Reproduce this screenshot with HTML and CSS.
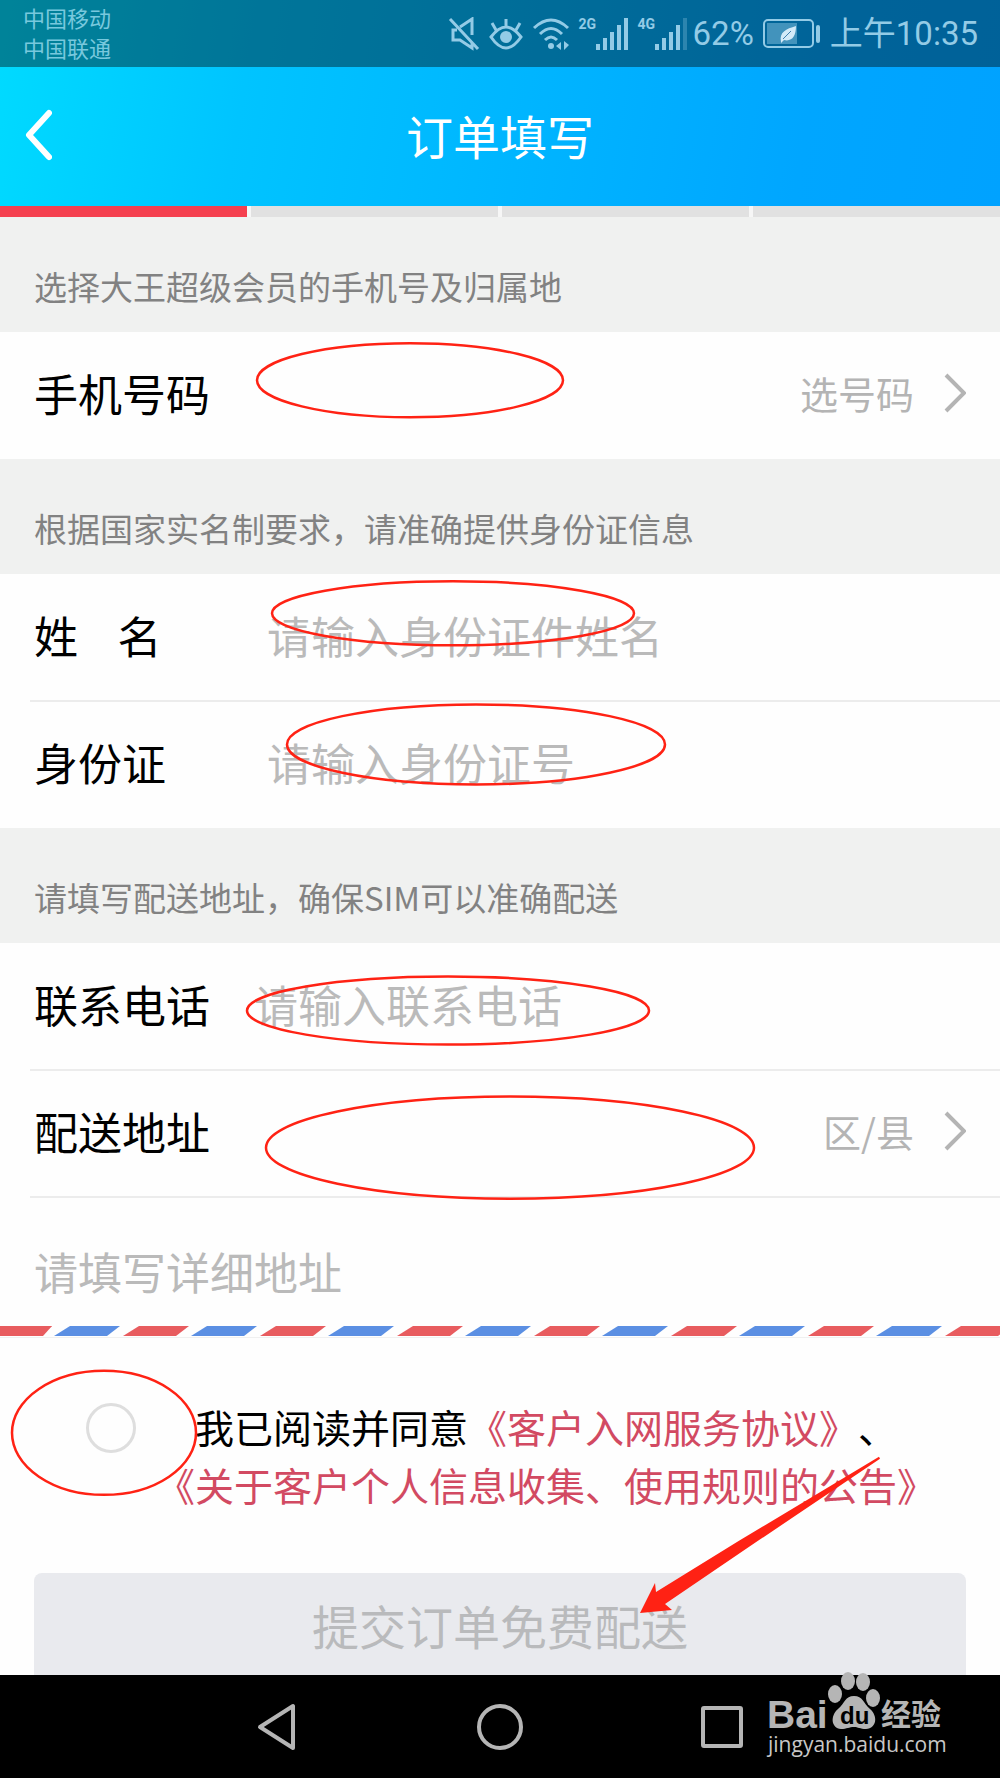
FILE: index.html
```html
<!DOCTYPE html>
<html lang="zh-CN">
<head>
<meta charset="utf-8">
<meta name="viewport" content="width=device-width, initial-scale=1">
<title>订单填写</title>
<link rel="stylesheet" href="styles.css">
</head>
<body>
<div class="page">
  <header class="top">
    <div class="status">
      <div class="carriers"><span>中国移动</span><span>中国联通</span></div>
      <div class="indicators">
        <svg width="32" height="34" viewBox="0 0 32 34" fill="none" stroke="currentColor" stroke-width="3">
          <path d="M2 2 30 32M12 10 24 2V18M24 25V31L12 23H5V13H9"/>
        </svg>
        <svg width="34" height="34" viewBox="0 0 34 34" fill="none" stroke="currentColor" stroke-width="3">
          <path d="M2 20Q17 0 32 20Q17 42 2 20ZM17 9V2M7 13 3 6M27 13 31 6"/>
          <circle cx="17" cy="20" r="6" fill="currentColor" stroke="none"/>
        </svg>
        <svg width="38" height="34" viewBox="0 0 38 34" fill="none" stroke="currentColor" stroke-width="3">
          <path d="M2 11Q19-5 36 11M8 17Q19 6 30 17M13 23Q19 17 25 23"/>
          <circle cx="19" cy="29" r="3" fill="currentColor" stroke="none"/>
          <path d="M29 25V33L24 29ZM32 24V33L37 28Z" fill="currentColor" stroke="none"/>
        </svg>
        <span class="signal"><small>2G</small>
          <svg width="34" height="34" viewBox="0 0 34 34" fill="currentColor"><path d="M1 27h4v6H1zM8 21h4v12H8zM15 15h4v18h-4zM22 8h4v25h-4zM29 1h4v32h-4z"/></svg>
        </span>
        <span class="signal"><small>4G</small>
          <svg width="34" height="34" viewBox="0 0 34 34" fill="currentColor"><path d="M1 27h4v6H1zM8 21h4v12H8zM15 15h4v18h-4zM22 8h4v25h-4z"/><path d="M29 1h4v32h-4z" opacity=".3"/></svg>
        </span>
        <span class="reading level">62%</span>
        <svg class="battery" width="58" height="30" viewBox="0 0 58 30" fill="none">
          <rect x="1" y="1" width="49" height="27" rx="4" stroke="currentColor" stroke-width="2"/>
          <path d="M4 4H34V25H4Z" fill="currentColor" opacity=".45"/>
          <path d="M18 23C16 13 23 10 33 7C33 17 29 23 21 21L18 24Z" fill="#d3eaf8"/>
          <path d="M20 20 28 12" stroke="#3f7fae"/>
          <rect x="53" y="6" width="4" height="18" rx="2" fill="currentColor"/>
        </svg>
        <span class="reading">上午10:35</span>
      </div>
    </div>
    <div class="titlebar">
      <button class="back" type="button" aria-label="返回">
        <svg width="28" height="52" viewBox="0 0 28 52" fill="none" stroke="#fff" stroke-width="6" stroke-linecap="round" stroke-linejoin="round"><path d="M25 4 5 26 25 48"/></svg>
      </button>
      <h1>订单填写</h1>
    </div>
  </header>

  <div class="steps"><i class="done"></i><i></i><i></i><i></i></div>

  <form class="form">
    <h2>选择大王超级会员的手机号及归属地</h2>
    <div class="row">
      <span class="label">手机号码</span>
      <button class="pick" type="button">选号码
        <svg width="22" height="40" viewBox="0 0 22 40" fill="none" stroke="currentColor" stroke-width="4"><path d="M2 2 20 20 2 38"/></svg>
      </button>
    </div>

    <h2>根据国家实名制要求，请准确提供身份证信息</h2>
    <div class="row">
      <label class="label" for="name">姓&nbsp;&nbsp;&nbsp;&nbsp;名</label>
      <input id="name" type="text" placeholder="请输入身份证件姓名">
    </div>
    <div class="row">
      <label class="label" for="idno">身份证</label>
      <input id="idno" type="text" placeholder="请输入身份证号">
    </div>

    <h2>请填写配送地址，确保SIM可以准确配送</h2>
    <div class="row">
      <label class="label label-short" for="phone">联系电话</label>
      <input id="phone" type="tel" placeholder="请输入联系电话">
    </div>
    <div class="row">
      <span class="label">配送地址</span>
      <button class="pick" type="button">区/县
        <svg width="22" height="40" viewBox="0 0 22 40" fill="none" stroke="currentColor" stroke-width="4"><path d="M2 2 20 20 2 38"/></svg>
      </button>
    </div>
    <div class="row row-detail">
      <input type="text" placeholder="请填写详细地址" aria-label="详细地址">
    </div>

    <svg class="airmail" width="100%" height="12" aria-hidden="true">
      <defs>
        <pattern id="pair" x="54" width="137" height="12" patternUnits="userSpaceOnUse">
          <path d="M0 10 16 0H66L53 10Z" fill="#5b8fe3"/>
          <path d="M69 10 85 0H135L122 10Z" fill="#e85c5f"/>
        </pattern>
      </defs>
      <rect width="100%" height="12" fill="url(#pair)"/>
      <path d="M0 0H52L43 10H0Z" fill="#e85c5f"/>
    </svg>

    <div class="agree">
      <input id="agree" type="radio" name="agree">
      <p><label for="agree">我已阅读并同意</label><a href="#service">《客户入网服务协议》</a>、<br><a href="#privacy">《关于客户个人信息收集、使用规则的公告》</a></p>
    </div>

    <button class="submit" type="button">提交订单免费配送</button>
  </form>

  <nav class="keys">
    <button type="button" aria-label="返回"><svg width="48" height="52" viewBox="0 0 48 52"><path d="M6 26 39 5V47Z"/></svg></button>
    <button type="button" aria-label="主屏幕"><svg width="48" height="52" viewBox="0 0 48 52"><circle cx="24" cy="26" r="21"/></svg></button>
    <button type="button" aria-label="最近任务"><svg width="48" height="52" viewBox="0 0 48 52"><rect x="5" y="7" width="38" height="38" rx="1"/></svg></button>
  </nav>

  <svg class="watermark" width="184" height="96" viewBox="0 0 184 96" fill="#b5b5b5" role="img" aria-label="Baidu 经验">
    <text class="wm-bai" x="2" y="60">Bai</text>
    <ellipse cx="70" cy="26" rx="7" ry="9"/><ellipse cx="83" cy="13" rx="7" ry="9"/><ellipse cx="98" cy="14" rx="7" ry="9"/><ellipse cx="108" cy="30" rx="7" ry="9"/>
    <path d="M89 28C98 28 98 35 105 41C113 48 112 60 101 61C95 61 93 59 89 59C84 59 82 61 76 61C66 60 65 48 73 41C80 35 80 28 89 28Z"/>
    <text class="wm-du" x="75" y="56">du</text>
    <text class="wm-cn" x="116" y="57">经验</text>
    <text class="wm-url" x="3" y="84">jingyan.baidu.com</text>
  </svg>

  <svg class="marks" viewBox="0 0 1000 1778" preserveAspectRatio="none" aria-hidden="true">
    <g fill="none" stroke="#ff2214" stroke-width="2.5">
      <ellipse cx="410" cy="380" rx="153" ry="37"/>
      <ellipse cx="453" cy="613" rx="181" ry="32"/>
      <ellipse cx="476" cy="744" rx="189" ry="40"/>
      <ellipse cx="448" cy="1010" rx="201" ry="34"/>
      <ellipse cx="510" cy="1147" rx="244" ry="51"/>
      <ellipse cx="104" cy="1432" rx="92" ry="62"/>
    </g>
    <path d="M640 1612 655 1582 656 1591 739 1540 879 1456 880 1458 758 1540 665 1603 672 1609Z" fill="#ff2214"/>
  </svg>
</div>
</body>
</html>
```
FILE: styles.css
```css
* { box-sizing: border-box; }

body {
  margin: 0;
  background: #fefefe;
  font-family: "Noto Sans CJK SC", sans-serif;
  font-weight: 400;
  text-spacing-trim: space-all;
}

button, input {
  margin: 0;
  padding: 0;
  border: 0;
  background: none;
  font: inherit;
  color: inherit;
}

svg { display: block; flex: none; }

.page { position: relative; }

.top { background: linear-gradient(100deg, #00dbff 0%, #00c4ff 25%, #00a6ff 80%, #00a2ff 100%); }

.status {
  display: flex;
  justify-content: space-between;
  align-items: center;
  height: 67px;
  padding: 0 22px 0 23px;
  background: rgba(0, 0, 0, .4);
  color: #93cbe6;
}

.carriers {
  display: flex;
  flex-direction: column;
  padding-bottom: 3px;
  font-size: 22px;
  line-height: 30px;
  color: #78c8dd;
}

.indicators { display: flex; align-items: center; gap: 9px; }

.signal { display: flex; align-items: flex-start; }

.signal small {
  width: 16px;
  font: 700 14px/14px Roboto, sans-serif;
}

.reading {
  font: 400 33px/40px Roboto, "Noto Sans CJK SC", sans-serif;
}

.level { margin-left: -4px; }

.titlebar {
  display: grid;
  grid-template-columns: 80px 1fr 80px;
  align-items: center;
  height: 139px;
  padding-bottom: 3px;
}

.back { padding-left: 24px; }

.titlebar h1 {
  margin: 0;
  font-size: 47px;
  line-height: 60px;
  font-weight: 400;
  text-align: center;
  color: #fff;
}

.steps { display: flex; gap: 4px; height: 11px; background: #f6f6f6; }
.steps i { flex: 1; background: #e1e1e1; }
.steps .done { background: #f5404f; }

.form h2 {
  margin: 0;
  height: 115px;
  padding: 45px 34px 0;
  background: #f0f1f0;
  font-size: 33px;
  line-height: 48px;
  font-weight: 400;
  color: #828282;
}

.row {
  display: flex;
  align-items: center;
  height: 127px;
  margin-left: 30px;
  padding: 0 34px 6px 4px;
  font-size: 44px;
  line-height: 60px;
  color: #000;
}

.row + .row {
  height: 128px;
  margin-top: -1px;
  border-top: 2px solid #ececec;
}

.label { flex: none; width: 233px; }
.label-short { width: 220px; }

.row input { flex: 1; min-width: 0; height: 64px; outline: 0; }
.row input::placeholder { color: #bababa; opacity: 1; }

.row + .row-detail { height: 130px; padding-top: 17px; padding-bottom: 0; }

.pick {
  display: flex;
  align-items: center;
  gap: 30px;
  margin-left: auto;
  font-size: 38px;
  color: #b4b4b4;
}

.airmail { border-bottom: 1px solid #f0f0f0; }

.agree {
  display: flex;
  align-items: flex-start;
  gap: 20px;
  padding: 59px 40px 60px 86px;
}

.agree input {
  appearance: none;
  flex: none;
  width: 50px;
  height: 50px;
  margin-top: 6px;
  border: 3px solid #dedede;
  border-radius: 50%;
}

.agree p {
  margin: 0;
  font-size: 39px;
  line-height: 58px;
  text-indent: 39px;
  color: #000;
  white-space: nowrap;
}

.agree a { color: #d24a62; text-decoration: none; }

.submit {
  display: block;
  width: calc(100% - 68px);
  height: 102px;
  margin: 0 34px;
  padding-top: 2px;
  border-radius: 8px 8px 0 0;
  background: #e9eaee;
  font-size: 47px;
  line-height: 60px;
  color: #b9babc;
}

.keys {
  display: flex;
  justify-content: center;
  align-items: center;
  gap: 174px;
  height: 104px;
  background: #000;
}

.keys svg {
  fill: none;
  stroke: #b5b5b5;
  stroke-width: 4;
  stroke-linejoin: round;
}

/* Overlays on top of the page */
.watermark { position: absolute; right: 51px; bottom: 15px; }
.wm-bai { font: 700 39px "Liberation Sans", sans-serif; }
.wm-du { font: 700 24px "Liberation Sans", sans-serif; fill: #000; }
.wm-cn { font: 700 30px "Noto Sans CJK SC", sans-serif; }
.wm-url { font: 400 21px "Open Sans", sans-serif; fill: #c8c8c8; }

.marks {
  position: absolute;
  inset: 0;
  width: 100%;
  height: 100%;
  pointer-events: none;
}
```
